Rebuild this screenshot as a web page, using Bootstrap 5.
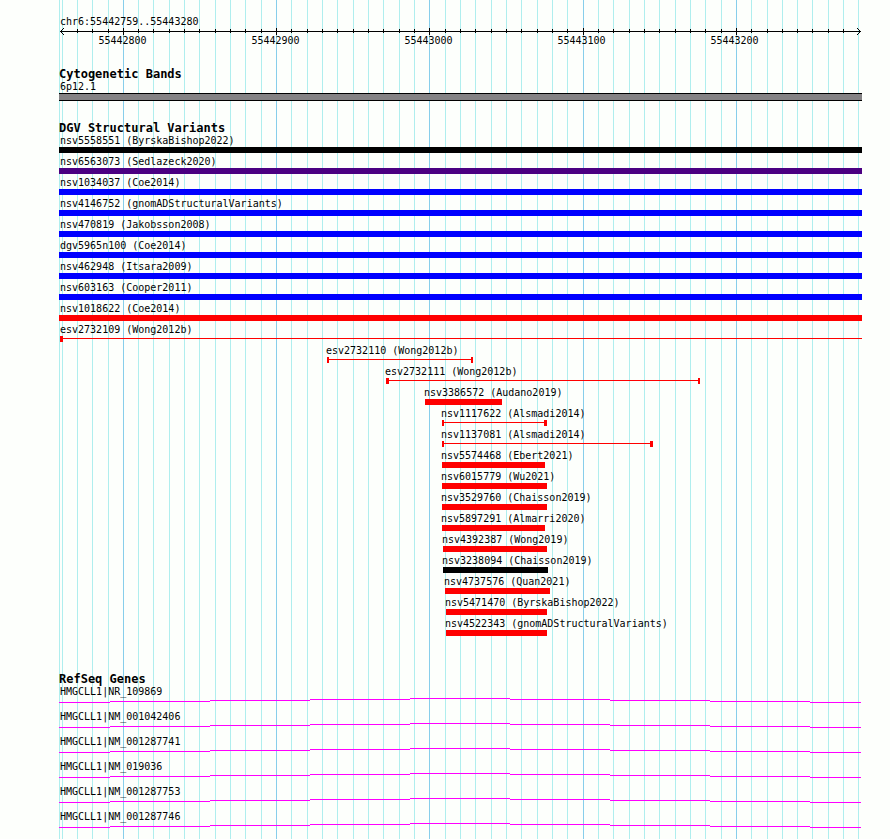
<!DOCTYPE html>
<html lang="en">
<head>
<meta charset="utf-8">
<meta name="viewport" content="width=device-width, initial-scale=1">
<title>chr6:55442759..55443280</title>
<link href="https://cdn.jsdelivr.net/npm/bootstrap@5.3.0/dist/css/bootstrap.min.css" rel="stylesheet">
<style>
  body { background: #fdfffc; color: #000; font: 10px/13px "DejaVu Sans Mono", monospace; }
  .browser { padding: 15px 28px 0 59px; }
  .panel { min-height: calc(100vh - 15px); }
  .gridlines { inset: -15px 0 0 0; height: calc(100% + 15px); }
  svg { display: block; width: 100%; shape-rendering: crispEdges; fill: none; }
  .minor { stroke: #afeeee; }
  .major { stroke: #87ceeb; }
  .axis { height: 7px; stroke: #000; }
  .scale { margin-left: calc(-13 / 803 * 100%); line-height: 11px; }
  .scale > span { width: calc(153 / 816 * 100%); }
  h2 { font-size: 12px; font-weight: 700; line-height: 12px; margin: 0; }
  .cyto { margin-top: 22px; }
  .variants { margin-top: 21px; }
  .genes { margin-top: 37px; }
  .variants ul { gap: 2px; }
  .genes ul { gap: 7px; }
  .name { display: block; height: 13px; padding-left: 1px; white-space: nowrap; }
  .chromo { height: 8px; background: #848284; border: solid #000; border-width: 1px 0; }
  /* --s and --e are the ends of a feature on the 803-unit track */
  .feature { margin-left: calc(var(--s) / 803 * 100%); }
  .feature .name { margin-left: -1px; padding-left: 0; }
  .feature .glyph { width: calc((var(--e) - var(--s)) / (803 - var(--s)) * 100%); }
  .glyph { height: 6px; color: #f00; background: currentColor; }
  .ink { color: #000; }
  .indigo { color: #4b0082; }
  .blue { color: #00f; }
  .span-line { background: linear-gradient(currentColor, currentColor) 0 2px / 100% 1px no-repeat; border: solid; border-width: 0 2px; background-origin: border-box; }
  .cap-l { border-left-width: 3px; }
  .cap-r { border-right-width: 3px; }
  .open-r { border-right-width: 0; }
  .intron { height: 5px; stroke: #f0f; }
</style>
</head>
<body>
<main class="browser">
<div class="panel position-relative">
  <svg class="gridlines position-absolute" viewBox="0 0 803 1" preserveAspectRatio="none" aria-hidden="true">
    <path class="minor" d="M.5 0v1M3.5 0v1M18.5 0v1M33.5 0v1M49.5 0v1M79.5 0v1M94.5 0v1M110.5 0v1M125.5 0v1M140.5 0v1M156.5 0v1M171.5 0v1M186.5 0v1M202.5 0v1M232.5 0v1M248.5 0v1M263.5 0v1M278.5 0v1M294.5 0v1M309.5 0v1M324.5 0v1M340.5 0v1M355.5 0v1M386.5 0v1M401.5 0v1M416.5 0v1M432.5 0v1M447.5 0v1M462.5 0v1M478.5 0v1M493.5 0v1M508.5 0v1M539.5 0v1M554.5 0v1M570.5 0v1M585.5 0v1M600.5 0v1M616.5 0v1M631.5 0v1M646.5 0v1M662.5 0v1M692.5 0v1M708.5 0v1M723.5 0v1M738.5 0v1M753.5 0v1M769.5 0v1M784.5 0v1M799.5 0v1"/>
    <path class="major" d="M64.5 0v1M217.5 0v1M370.5 0v1M524.5 0v1M677.5 0v1"/>
  </svg>
  <div class="position-relative">
    <header>
      <span class="name">chr6:55442759..55443280</span>
      <svg class="axis" viewBox="0 0 803 7" preserveAspectRatio="none" aria-hidden="true">
        <path d="M1 3.5H802M64.5 0v7M217.5 0v7M370.5 0v7M524.5 0v7M677.5 0v7"/>
        <path d="M18.5 1v4M33.5 1v4M49.5 1v4M79.5 1v4M94.5 1v4M110.5 1v4M125.5 1v4M140.5 1v4M156.5 1v4M171.5 1v4M186.5 1v4M202.5 1v4M232.5 1v4M248.5 1v4M263.5 1v4M278.5 1v4M294.5 1v4M309.5 1v4M324.5 1v4M340.5 1v4M355.5 1v4M386.5 1v4M401.5 1v4M416.5 1v4M432.5 1v4M447.5 1v4M462.5 1v4M478.5 1v4M493.5 1v4M508.5 1v4M539.5 1v4M554.5 1v4M570.5 1v4M585.5 1v4M600.5 1v4M616.5 1v4M631.5 1v4M646.5 1v4M662.5 1v4M692.5 1v4M708.5 1v4M723.5 1v4M738.5 1v4M753.5 1v4M769.5 1v4M784.5 1v4"/>
        <path d="M2 2.5h1M3 1.5h1M4 .5h1M2 4.5h1M3 5.5h1M4 6.5h1M800 2.5h1M799 1.5h1M798 .5h1M800 4.5h1M799 5.5h1M798 6.5h1"/>
      </svg>
      <div class="scale d-flex text-center"><span>55442800</span><span>55442900</span><span>55443000</span><span>55443100</span><span>55443200</span></div>
    </header>

    <section class="cyto">
      <h2>Cytogenetic Bands</h2>
      <span class="name">6p12.1</span>
      <div class="chromo"></div>
    </section>

    <section class="variants">
      <h2>DGV Structural Variants</h2>
      <ul class="list-unstyled d-grid mb-0">
        <li><span class="name">nsv5558551 (ByrskaBishop2022)</span><div class="glyph ink"></div></li>
        <li><span class="name">nsv6563073 (Sedlazeck2020)</span><div class="glyph indigo"></div></li>
        <li><span class="name">nsv1034037 (Coe2014)</span><div class="glyph blue"></div></li>
        <li><span class="name">nsv4146752 (gnomADStructuralVariants)</span><div class="glyph blue"></div></li>
        <li><span class="name">nsv470819 (Jakobsson2008)</span><div class="glyph blue"></div></li>
        <li><span class="name">dgv5965n100 (Coe2014)</span><div class="glyph blue"></div></li>
        <li><span class="name">nsv462948 (Itsara2009)</span><div class="glyph blue"></div></li>
        <li><span class="name">nsv603163 (Cooper2011)</span><div class="glyph blue"></div></li>
        <li><span class="name">nsv1018622 (Coe2014)</span><div class="glyph"></div></li>
        <li><span class="name">esv2732109 (Wong2012b)</span><div class="feature" style="--s:1;--e:803"><div class="glyph span-line cap-l open-r"></div></div></li>
        <li class="feature" style="--s:268;--e:414"><span class="name">esv2732110 (Wong2012b)</span><div class="glyph span-line"></div></li>
        <li class="feature" style="--s:327;--e:641"><span class="name">esv2732111 (Wong2012b)</span><div class="glyph span-line cap-l"></div></li>
        <li class="feature" style="--s:366;--e:443"><span class="name">nsv3386572 (Audano2019)</span><div class="glyph"></div></li>
        <li class="feature" style="--s:383;--e:488"><span class="name">nsv1117622 (Alsmadi2014)</span><div class="glyph span-line cap-r"></div></li>
        <li class="feature" style="--s:383;--e:594"><span class="name">nsv1137081 (Alsmadi2014)</span><div class="glyph span-line cap-r"></div></li>
        <li class="feature" style="--s:383;--e:486"><span class="name">nsv5574468 (Ebert2021)</span><div class="glyph"></div></li>
        <li class="feature" style="--s:383;--e:488"><span class="name">nsv6015779 (Wu2021)</span><div class="glyph"></div></li>
        <li class="feature" style="--s:383;--e:488"><span class="name">nsv3529760 (Chaisson2019)</span><div class="glyph"></div></li>
        <li class="feature" style="--s:383;--e:486"><span class="name">nsv5897291 (Almarri2020)</span><div class="glyph"></div></li>
        <li class="feature" style="--s:384;--e:488"><span class="name">nsv4392387 (Wong2019)</span><div class="glyph"></div></li>
        <li class="feature" style="--s:384;--e:489"><span class="name">nsv3238094 (Chaisson2019)</span><div class="glyph ink"></div></li>
        <li class="feature" style="--s:386;--e:491"><span class="name">nsv4737576 (Quan2021)</span><div class="glyph"></div></li>
        <li class="feature" style="--s:387;--e:488"><span class="name">nsv5471470 (ByrskaBishop2022)</span><div class="glyph"></div></li>
        <li class="feature" style="--s:387;--e:488"><span class="name">nsv4522343 (gnomADStructuralVariants)</span><div class="glyph"></div></li>
      </ul>
    </section>

    <section class="genes">
      <h2>RefSeq Genes</h2>
      <svg class="d-none" aria-hidden="true">
        <symbol id="intron" viewBox="0 0 803 5" preserveAspectRatio="none">
          <path d="M0 4.5H51M51 3.5H151M151 2.5H251M251 1.5H351M351 .5H451M451 1.5H551M551 2.5H651M651 3.5H751M751 4.5H802"/>
        </symbol>
      </svg>
      <ul class="list-unstyled d-grid mb-0">
        <li><span class="name">HMGCLL1|NR_109869</span><svg class="intron" aria-hidden="true"><use href="#intron"/></svg></li>
        <li><span class="name">HMGCLL1|NM_001042406</span><svg class="intron" aria-hidden="true"><use href="#intron"/></svg></li>
        <li><span class="name">HMGCLL1|NM_001287741</span><svg class="intron" aria-hidden="true"><use href="#intron"/></svg></li>
        <li><span class="name">HMGCLL1|NM_019036</span><svg class="intron" aria-hidden="true"><use href="#intron"/></svg></li>
        <li><span class="name">HMGCLL1|NM_001287753</span><svg class="intron" aria-hidden="true"><use href="#intron"/></svg></li>
        <li><span class="name">HMGCLL1|NM_001287746</span><svg class="intron" aria-hidden="true"><use href="#intron"/></svg></li>
      </ul>
    </section>
  </div>
</div>
</main>
<script src="https://cdn.jsdelivr.net/npm/bootstrap@5.3.0/dist/js/bootstrap.bundle.min.js"></script>
</body>
</html>
